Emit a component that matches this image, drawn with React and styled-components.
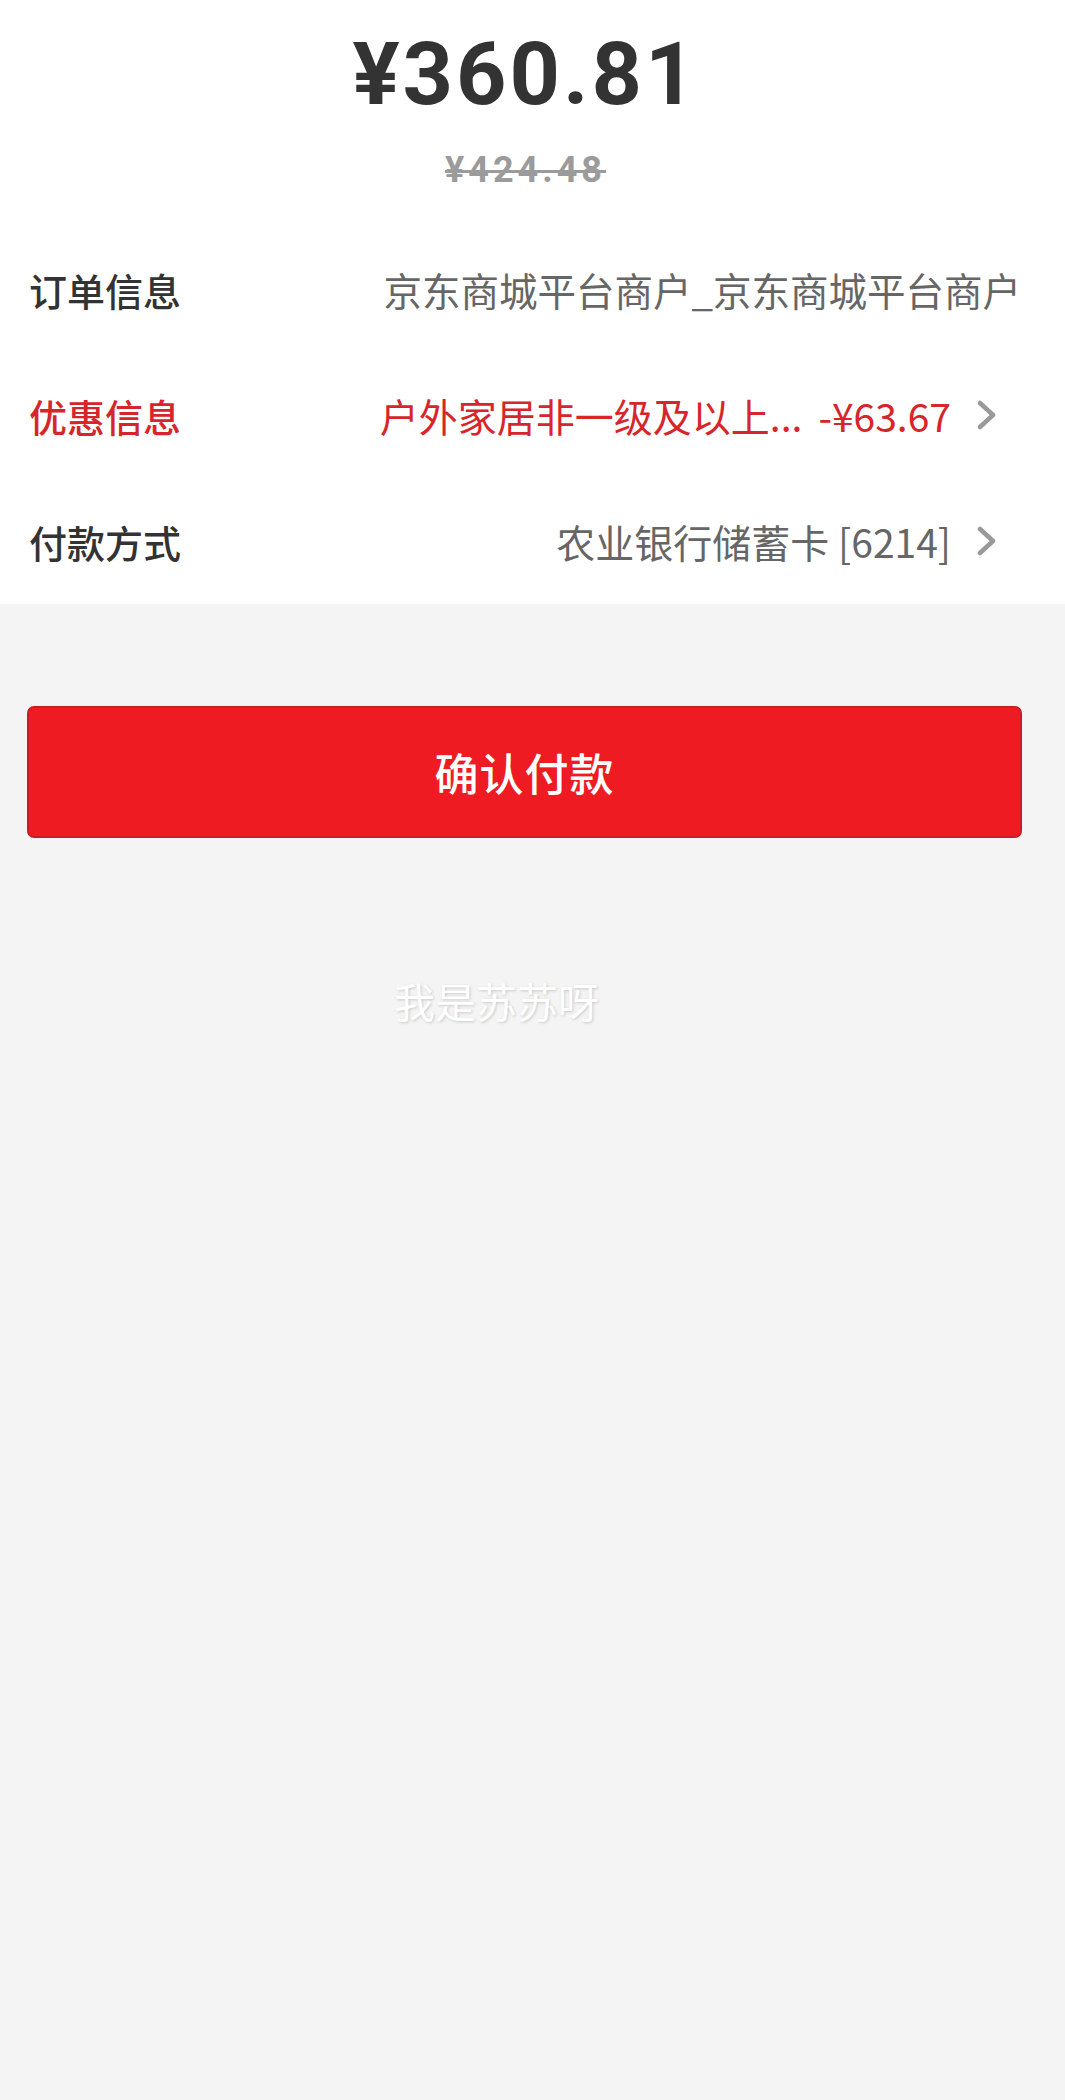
import React from 'react';
import styled, { createGlobalStyle } from 'styled-components';

const GlobalStyle = createGlobalStyle`
  html, body {
    margin: 0;
    padding: 0;
    background: #f4f4f4;
  }
  body {
    font-family: "Noto Sans CJK SC", "Noto Sans", sans-serif;
    min-height: 2100px;
  }
`;

const Page = styled.div`
  position: relative;
  width: 1065px;
  min-height: 2100px;
  background: #f4f4f4;
`;

const Card = styled.div`
  background: #ffffff;
`;

const Header = styled.div`
  display: flex;
  flex-direction: column;
  align-items: center;
  padding: 24px 14px 36px 0;
`;

const Price = styled.div`
  font-family: Roboto, "Liberation Sans", sans-serif;
  font-weight: 700;
  font-size: 88px;
  line-height: 100px;
  letter-spacing: 3px;
  color: #333333;
`;

const OldPrice = styled.div`
  margin-top: 26px;
  font-family: Roboto, "Liberation Sans", sans-serif;
  font-weight: 700;
  font-size: 36px;
  line-height: 40px;
  letter-spacing: 4px;
  color: #9b9b9b;
  text-decoration: line-through;
  text-decoration-thickness: 3px;
`;

const Row = styled.div`
  display: flex;
  align-items: center;
  height: 126px;
  padding: 0 44px 0 29px;
`;

const Label = styled.div`
  flex: none;
  width: 300px;
  font-size: 38px;
  font-weight: 500;
  color: ${(p) => (p.$red ? '#d6262b' : '#333333')};
`;

const Value = styled.div`
  flex: 1;
  display: flex;
  justify-content: flex-end;
  align-items: center;
  white-space: nowrap;
  font-size: ${(p) => p.$size || 39}px;
  color: ${(p) => (p.$red ? '#d6262b' : '#666666')};
`;

const Discount = styled.span`
  margin-left: 16px;
`;

const Arrow = styled.svg`
  flex: none;
  width: 20px;
  height: 30px;
  margin: 0 24px 0 26px;
`;

const Chevron = () => (
  <Arrow viewBox="0 0 20 30">
    <path d="M3 3 L16 15 L3 27" fill="none" stroke="#999999" strokeWidth="4.5" strokeLinecap="round" strokeLinejoin="round" />
  </Arrow>
);

const Actions = styled.div`
  padding: 102px 43px 0 27px;
`;

const PayButton = styled.button`
  display: block;
  width: 100%;
  height: 132px;
  border: 2px solid #c91d24;
  border-radius: 7px;
  background: #ee1b23;
  color: #ffffff;
  font-family: "Noto Sans CJK SC", sans-serif;
  font-size: 44px;
  font-weight: 500;
  letter-spacing: 1px;
`;

const Watermark = styled.div`
  position: absolute;
  left: 394px;
  top: 970px;
  font-family: "Noto Sans CJK SC", sans-serif;
  font-size: 41px;
  color: #ffffff;
  text-shadow: 1px 1px 3px rgba(0, 0, 0, 0.18);
  pointer-events: none;
`;

export default function App() {
  return (
    <Page>
      <GlobalStyle />
      <Card>
        <Header>
          <Price>¥360.81</Price>
          <OldPrice>¥424.48</OldPrice>
        </Header>
        <Row>
          <Label>订单信息</Label>
          <Value $size={38.5}>京东商城平台商户_京东商城平台商户</Value>
        </Row>
        <Row>
          <Label $red>优惠信息</Label>
          <Value $red>
            户外家居非一级及以上...
            <Discount>-¥63.67</Discount>
          </Value>
          <Chevron />
        </Row>
        <Row>
          <Label>付款方式</Label>
          <Value>农业银行储蓄卡 [6214]</Value>
          <Chevron />
        </Row>
      </Card>
      <Actions>
        <PayButton>确认付款</PayButton>
      </Actions>
      <Watermark>我是苏苏呀</Watermark>
    </Page>
  );
}
